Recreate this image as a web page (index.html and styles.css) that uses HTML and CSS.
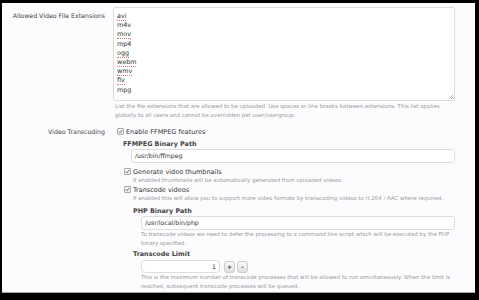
FILE: index.html
```html
<!DOCTYPE html>
<html lang="en">
<head>
    <meta charset="UTF-8">
    <title>Video Options</title>
    <link rel="stylesheet" href="styles.css">
</head>
<body>
    <div class="page">
        <div class="row first">
            <div class="label">Allowed Video File Extensions</div>
            <div class="field">
                <div class="textarea">
                    <div><span class="typo">avi</span></div>
                    <div>m4v</div>
                    <div><span class="typo">mov</span></div>
                    <div>mp4</div>
                    <div><span class="typo">ogg</span></div>
                    <div><span class="typo">webm</span></div>
                    <div><span class="typo">wmv</span></div>
                    <div><span class="typo">flv</span></div>
                    <div>mpg</div>
                    <svg class="grip" width="6" height="6" viewBox="0 0 6 6"><path d="M5 1 L1 5 M5 3 L3 5" stroke="#999" stroke-width="0.8"/></svg>
                </div>
                <p class="hint wide">List the file extensions that are allowed to be uploaded. Use spaces or line breaks between extensions. This list applies globally to all users and cannot be overridden per user/usergroup.</p>
            </div>
        </div>

        <div class="row">
            <div class="label">Video Transcoding</div>
            <div class="field">
                <div class="check-row top">
                    <span class="box"><svg width="7" height="7" viewBox="0 0 7 7"><path d="M1.2 3.6 L2.8 5.3 L5.9 1.2" fill="none" stroke="#444" stroke-width="1.1"/></svg></span>
                    <span class="check-label">Enable FFMPEG features</span>
                </div>
                <div class="level1">
                    <div class="sub-label">FFMPEG Binary Path</div>
                    <div class="input path1">/usr/bin/ffmpeg</div>

                    <div class="check-row">
                        <span class="box"><svg width="7" height="7" viewBox="0 0 7 7"><path d="M1.2 3.6 L2.8 5.3 L5.9 1.2" fill="none" stroke="#444" stroke-width="1.1"/></svg></span>
                        <span class="check-label">Generate video thumbnails</span>
                    </div>
                    <p class="hint indent">If enabled thumbnails will be automatically generated from uploaded videos.</p>

                    <div class="check-row next">
                        <span class="box"><svg width="7" height="7" viewBox="0 0 7 7"><path d="M1.2 3.6 L2.8 5.3 L5.9 1.2" fill="none" stroke="#444" stroke-width="1.1"/></svg></span>
                        <span class="check-label">Transcode videos</span>
                    </div>
                    <p class="hint indent">If enabled this will allow you to support more video formats by transcoding videos to H.264 / AAC where required.</p>

                    <div class="level2">
                        <div class="sub-label">PHP Binary Path</div>
                        <div class="input path2">/usr/local/bin/php</div>
                        <p class="hint">To transcode videos we need to defer the processing to a command line script which will be executed by the PHP binary specified.</p>

                        <div class="sub-label limit">Transcode Limit</div>
                        <div class="spin">
                            <div class="input number">1</div>
                            <span class="spin-btn">+</span>
                            <span class="spin-btn">-</span>
                        </div>
                        <p class="hint">This is the maximum number of transcode processes that will be allowed to run simultaneously. When the limit is reached, subsequent transcode processes will be queued.</p>
                    </div>
                </div>
            </div>
        </div>
    </div>
</body>
</html>
```

FILE: styles.css
```css
body {
    margin: 0;
    background-color: #000;
    font-family: "DejaVu Sans", Verdana, sans-serif;
    color: #333;
}

.page {
    margin: 3px 0 0 2px;
    width: 473px;
    height: 289px;
    background-color: #fcfcfe;
    border-bottom: 1px solid #aaa;
    overflow: hidden;
}

.row {
    display: flex;
}

.row.first {
    padding-top: 4px;
}

.label {
    width: 103px;
    text-align: right;
    font-size: 6.25px;
    color: #444;
    flex-shrink: 0;
}

.row.first .label {
    padding-top: 5px;
}

.field {
    margin-left: 8px;
    width: 342px;
}

.textarea {
    position: relative;
    height: 84px;
    background: #fff;
    border: 1px solid #ddd;
    border-radius: 2px;
    padding: 4px 3px;
    font-size: 6.4px;
    line-height: 9.2px;
    color: #333;
}

.typo {
    border-bottom: 1px dotted #e07070;
}

.grip {
    position: absolute;
    right: 0;
    bottom: 0;
}

.hint {
    margin: 0;
    font-size: 5.45px;
    line-height: 9px;
    color: #9a9a9a;
}

.hint.wide {
    margin: 1px 0 0 2px;
    height: 18px;
}

.row + .row {
    margin-top: 7px;
}

.row + .row .label {
    padding-top: 1px;
}

.check-row {
    display: flex;
    align-items: center;
    height: 9px;
    font-size: 6.5px;
    color: #333;
}

.check-row.top {
    margin-left: 4px;
}

.box {
    width: 7px;
    height: 7px;
    border: 1px solid #aaa;
    border-radius: 1px;
    background: linear-gradient(#fff, #e8e8e8);
    display: flex;
    align-items: center;
    justify-content: center;
    margin-right: 2px;
    box-sizing: border-box;
}

.box svg {
    width: 7px;
    height: 7px;
}

.level1 {
    margin-left: 10px;
}

.level1 .check-row {
    margin-left: 1px;
    margin-top: 4px;
}

.level1 .check-row.next {
    margin-top: 0;
}

.level1 .hint.indent {
    margin-left: 10px;
}

.sub-label {
    font-size: 6.4px;
    font-weight: bold;
    color: #444;
    line-height: 9px;
    margin-top: 4px;
}

.input {
    background: #fff;
    border: 1px solid #ddd;
    border-radius: 3px;
    height: 12px;
    line-height: 12px;
    font-size: 6.2px;
    color: #333;
    padding-left: 3px;
    box-sizing: content-box;
}

.path1 {
    margin-left: 8px;
    margin-top: 0;
}

.level2 {
    margin-left: 10px;
}

.level2 .sub-label {
    margin-top: 4px;
}

.level2 .input {
    margin-left: 8px;
}

.level2 .hint {
    margin-left: 8px;
}

.sub-label.limit {
    margin-top: 2px;
}

.spin {
    display: flex;
    align-items: center;
    margin-top: 1px;
}

.input.number {
    width: 74px;
    height: 11px;
    line-height: 11px;
    text-align: right;
    padding: 0 3px 0 0;
    border-radius: 4px;
}

.spin-btn {
    width: 9px;
    height: 10px;
    margin-left: 4px;
    border: 1px solid #ccc;
    border-radius: 3px;
    background: linear-gradient(#fafafa, #dedede);
    font-size: 6px;
    font-weight: bold;
    line-height: 10px;
    text-align: center;
    color: #444;
}

.spin-btn + .spin-btn {
    margin-left: 2px;
}
```
